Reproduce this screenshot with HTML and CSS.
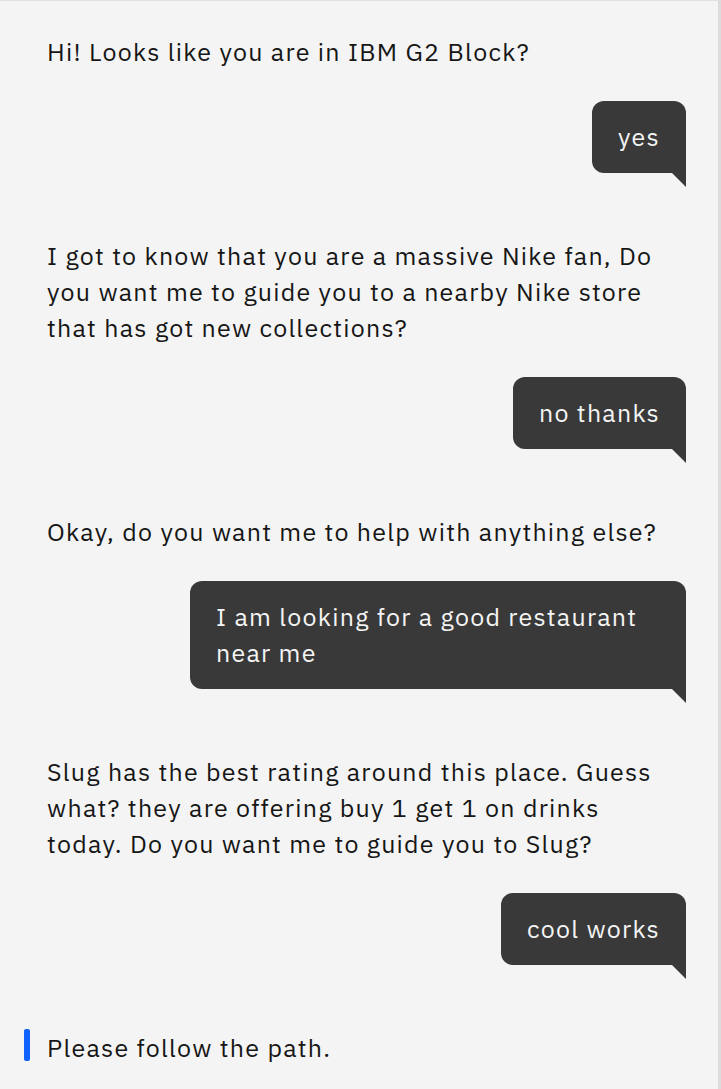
FILE: index.html
```html
<!DOCTYPE html>
<html lang="en">
<head>
<meta charset="utf-8">
<title>Chat</title>
<link rel="stylesheet" href="styles.css">
</head>
<body>
<main class="chat">
  <p class="msg bot">Hi! Looks like you are in IBM G2 Block?</p>
  <div class="msg user"><div class="bubble">yes</div></div>
  <p class="msg bot">I got to know that you are a massive Nike fan, Do you want me to guide you to a nearby Nike store that has got new collections?</p>
  <div class="msg user"><div class="bubble">no thanks</div></div>
  <p class="msg bot">Okay, do you want me to help with anything else?</p>
  <div class="msg user"><div class="bubble">I am looking for a good restaurant near me</div></div>
  <p class="msg bot">Slug has the best rating around this place. Guess what? they are offering buy 1 get 1 on drinks today. Do you want me to guide you to Slug?</p>
  <div class="msg user"><div class="bubble">cool works</div></div>
  <div class="msg status"><span class="bar"></span><span class="status-text">Please follow the path.</span></div>
</main>
</body>
</html>
```
FILE: styles.css
```css
html, body {
  margin: 0;
  padding: 0;
  background: #f4f4f4;
}
body {
  font-family: "IBM Plex Sans", "Noto Sans", "Open Sans", sans-serif;
  color: #161616;
}
.chat {
  box-sizing: border-box;
  min-height: 1089px;
  border-top: 1px solid #e0e0e0;
  border-right: 3px solid #dcdcdc;
  padding: 33px 32px 40px 0;
  display: flex;
  flex-direction: column;
}
.msg {
  margin: 0;
  font-size: 25px;
  letter-spacing: 1.25px;
  line-height: 36px;
}
.bot {
  padding-left: 47px;
  padding-right: 18px;
}
.bot + .user {
  margin-top: 31px;
}
.user + .bot,
.user + .status {
  margin-top: 65px;
}
.user {
  display: flex;
  justify-content: flex-end;
}
.bubble {
  position: relative;
  box-sizing: border-box;
  max-width: 496px;
  background: #393939;
  color: #f4f4f4;
  padding: 18px 26px;
  border-radius: 12px 12px 0 12px;
}
.bubble::after {
  content: "";
  position: absolute;
  right: 0;
  top: 100%;
  width: 14px;
  height: 14px;
  background: #393939;
  clip-path: polygon(0 0, 100% 0, 100% 100%);
}
.status {
  display: flex;
  align-items: flex-start;
  padding-left: 24px;
}
.bar {
  width: 6px;
  height: 32px;
  margin-top: -1px;
  border-radius: 2px;
  background: #0f62fe;
  flex: none;
}
.status-text {
  margin-left: 17px;
}
```
